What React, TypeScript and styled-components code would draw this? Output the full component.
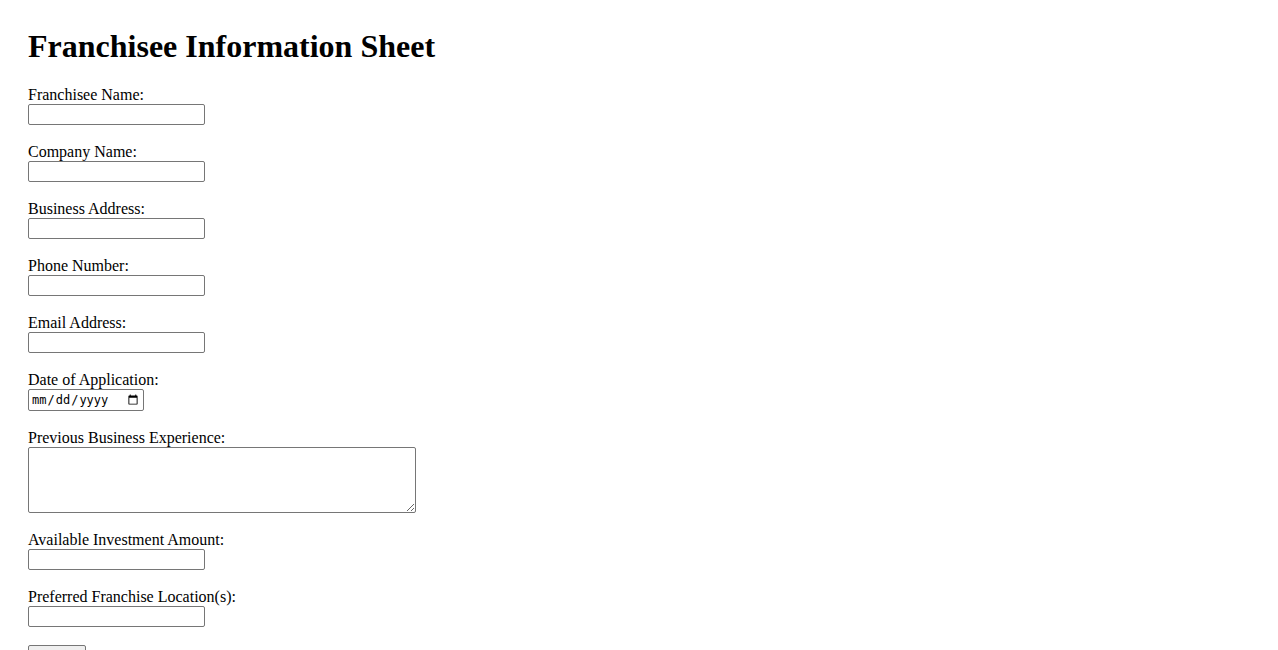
import React from 'react';
import styled, { createGlobalStyle } from 'styled-components';

const GlobalStyle = createGlobalStyle`
  body {
    margin: 8px;
    background: #fff;
    color: #000;
    font-family: "Liberation Serif", "Times New Roman", serif;
  }
`;

const Page = styled.div`
  padding: 20px;
`;

const Title = styled.h1`
  margin: 0 0 21px;
  font-size: 32px;
  font-weight: bold;
  line-height: 37px;
`;

const Form = styled.form`
  display: flex;
  flex-direction: column;
  align-items: flex-start;
`;

const Field = styled.div`
  display: flex;
  flex-direction: column;
  align-items: flex-start;
  margin-bottom: 18px;
`;

const Label = styled.label`
  font-size: 16px;
  line-height: 18px;
`;

const TextInput = styled.input`
  box-sizing: border-box;
  width: 177px;
  height: 21px;
  margin: 0;
  padding: 1px 2px;
  border: 1px solid #767676;
  border-radius: 2px;
  background: #fff;
  font-family: "Liberation Sans", Arial, sans-serif;
  font-size: 13.33px;
`;

const DateInput = styled(TextInput)`
  width: 116px;
  height: 22px;
  font-family: "DejaVu Sans Mono", "Liberation Mono", monospace;
  font-size: 12px;
`;

const TextArea = styled.textarea`
  box-sizing: border-box;
  width: 388px;
  height: 66px;
  margin: 0;
  padding: 2px;
  border: 1px solid #767676;
  border-radius: 2px;
  background: #fff;
  font-family: "DejaVu Sans Mono", monospace;
  font-size: 13.33px;
  display: block;
`;

const SubmitButton = styled.button`
  box-sizing: border-box;
  height: 21px;
  width: 58px;
  padding: 1px 6px;
  border: 1px solid #767676;
  border-radius: 2px;
  background: #efefef;
  font-family: "Liberation Sans", Arial, sans-serif;
  font-size: 13.33px;
`;

const textFields = [
  { id: 'franchiseeName', label: 'Franchisee Name:' },
  { id: 'companyName', label: 'Company Name:' },
  { id: 'businessAddress', label: 'Business Address:' },
  { id: 'phoneNumber', label: 'Phone Number:', type: 'tel' },
  { id: 'emailAddress', label: 'Email Address:', type: 'email' },
];

const App: React.FC = () => (
  <Page>
    <GlobalStyle />
    <Title>Franchisee Information Sheet</Title>
    <Form onSubmit={(e) => e.preventDefault()}>
      {textFields.map((f) => (
        <Field key={f.id}>
          <Label htmlFor={f.id}>{f.label}</Label>
          <TextInput id={f.id} type={f.type ?? 'text'} />
        </Field>
      ))}
      <Field>
        <Label htmlFor="applicationDate">Date of Application:</Label>
        <DateInput id="applicationDate" type="date" />
      </Field>
      <Field>
        <Label htmlFor="experience">Previous Business Experience:</Label>
        <TextArea id="experience" />
      </Field>
      <Field>
        <Label htmlFor="investment">Available Investment Amount:</Label>
        <TextInput id="investment" type="text" />
      </Field>
      <Field>
        <Label htmlFor="locations">Preferred Franchise Location(s):</Label>
        <TextInput id="locations" type="text" />
      </Field>
      <SubmitButton type="submit">Submit</SubmitButton>
    </Form>
  </Page>
);

export default App;
